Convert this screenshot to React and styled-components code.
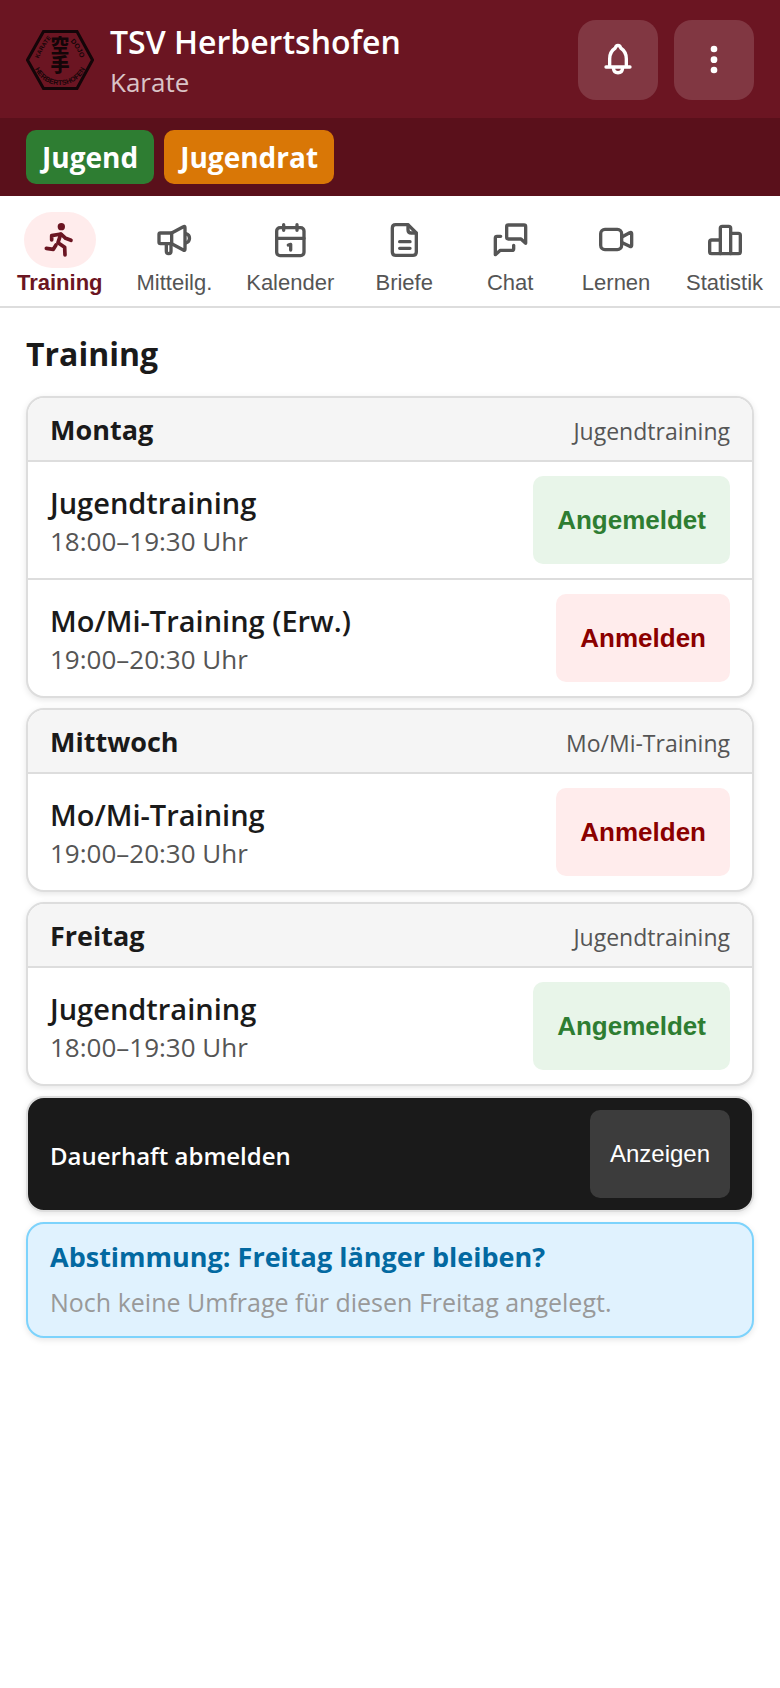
import React, { useState } from "react";
import styled, { createGlobalStyle } from "styled-components";

const GlobalStyle = createGlobalStyle`
  * {
    box-sizing: border-box;
  }

  body {
    margin: 0;
    background: #ffffff;
    color: #1a1a1a;
    font-family: "Segoe UI", "Open Sans", "Noto Sans", sans-serif;
  }

  h1, h2, h3, p {
    margin: 0;
  }
`;

const days = [
  {
    name: "Montag",
    info: "Jugendtraining",
    sessions: [
      { title: "Jugendtraining", time: "18:00–19:30 Uhr", joined: true },
      { title: "Mo/Mi-Training (Erw.)", time: "19:00–20:30 Uhr", joined: false },
    ],
  },
  {
    name: "Mittwoch",
    info: "Mo/Mi-Training",
    sessions: [
      { title: "Mo/Mi-Training", time: "19:00–20:30 Uhr", joined: false },
    ],
  },
  {
    name: "Freitag",
    info: "Jugendtraining",
    sessions: [
      { title: "Jugendtraining", time: "18:00–19:30 Uhr", joined: true },
    ],
  },
];

const tabs = [
  {
    id: "training",
    label: "Training",
    icon: (
      <g strokeWidth="11">
        <circle cx="58" cy="14" r="11" fill="currentColor" stroke="none" />
        <path d="M29 54V41L57 36L71 49L87 55" />
        <path d="M56 37L48 62L68 76L69 99" />
        <path d="M13 79L34 82L42 69" />
      </g>
    ),
  },
  {
    id: "mitteilungen",
    label: "Mitteilg.",
    icon: (
      <>
        <path d="M47 33H13Q9 33 9 37V61Q9 65 13 65H47Z" />
        <path d="M47 33L82 14Q87 11 87 17V81Q87 87 82 84L47 65" />
        <path d="M90 35C104 39 104 59 90 63" />
        <path d="M31 67V88Q31 95 38 95Q45 95 45 88V67" />
      </>
    ),
  },
  {
    id: "kalender",
    label: "Kalender",
    icon: (
      <>
        <rect x="14" y="17" width="82" height="84" rx="10" />
        <path d="M14 49H96M35 8V25M75 8V25M49 69L56 67V84" />
      </>
    ),
  },
  {
    id: "briefe",
    label: "Briefe",
    icon: (
      <>
        <path d="M29 8H66L91 33V90Q91 100 81 100H29Q19 100 19 90V18Q19 8 29 8Z" />
        <path d="M66 9V23Q66 33 76 33H90M41 59H72M41 79H72" />
      </>
    ),
  },
  {
    id: "chat",
    label: "Chat",
    icon: (
      <>
        <path d="M49 9H96Q101 9 101 14V64L87 51H49Q44 51 44 46V14Q44 9 49 9Z" />
        <path d="M26 43H15Q10 43 10 48V98L25 85H60Q65 85 65 80V70" />
      </>
    ),
  },
  {
    id: "lernen",
    label: "Lernen",
    icon: (
      <>
        <rect x="8" y="22" width="63" height="61" rx="13" />
        <path d="M73 44L95 32Q101 29 101 35V70Q101 76 95 73L73 62" />
      </>
    ),
  },
  {
    id: "statistik",
    label: "Statistik",
    icon: (
      <>
        <path d="M40 54H14Q8 54 8 60V89Q8 95 14 95H94Q100 95 100 89V40Q100 34 94 34H71" />
        <path d="M40 95V19Q40 13 46 13H65Q71 13 71 19V95" />
      </>
    ),
  },
];

const Icon = ({ children }) => (
  <IconSvg viewBox="0 0 108 108" aria-hidden="true">
    {children}
  </IconSvg>
);

const ClubLogo = () => (
  <LogoSvg viewBox="0 0 68 60" role="img" aria-label="Karate Dojo Herbertshofen">
    <defs>
      <path id="logo-left" d="M12 31Q16 18 27 6" />
      <path id="logo-right" d="M42 10Q52 17 55 31" />
      <path id="logo-bottom" d="M7 34C15 62 53 62 61 34" />
    </defs>
    <path
      d="M17.500 1.500H51L66.500 30L51 58.500H17.500L1.500 30Z"
      fill="none"
      stroke="#140508"
      strokeWidth="3"
    />
    <LogoText $size="6px">
      <textPath href="#logo-left" startOffset="50%">KARATE</textPath>
    </LogoText>
    <LogoText $size="7px">
      <textPath href="#logo-right" startOffset="50%">DOJO</textPath>
    </LogoText>
    <LogoText $size="7px">
      <textPath href="#logo-bottom" startOffset="50%">HERBERTSHOFEN</textPath>
    </LogoText>
    <LogoKanji x="34" y="6">空手</LogoKanji>
  </LogoSvg>
);

const DayCard = ({ day }) => (
  <Card>
    <CardHeader>
      <CardTitle>{day.name}</CardTitle>
      <CardInfo>{day.info}</CardInfo>
    </CardHeader>
    {day.sessions.map((session) => (
      <Session key={session.title}>
        <SessionText>
          <SessionTitle>{session.title}</SessionTitle>
          <SessionTime>{session.time}</SessionTime>
        </SessionText>
        <JoinButton type="button" $joined={session.joined}>
          {session.joined ? "Angemeldet" : "Anmelden"}
        </JoinButton>
      </Session>
    ))}
  </Card>
);

const App = () => {
  const [active, setActive] = useState("training");

  return (
    <>
      <GlobalStyle />
      <Header>
        <ClubLogo />
        <Brand>
          <ClubName>TSV Herbertshofen</ClubName>
          <Department>Karate</Department>
        </Brand>
        <HeaderButton type="button" aria-label="Benachrichtigungen">
          <Icon>
            <path d="M18 75H90M29 74V50C29 34 37 24 46 18C48 8 60 8 62 18C71 24 79 34 79 50V74M40 78C42 97 66 97 68 78" />
          </Icon>
        </HeaderButton>
        <HeaderButton type="button" aria-label="Menü">
          <Icon>
            <g fill="currentColor" stroke="none">
              <circle cx="54" cy="21" r="10" />
              <circle cx="54" cy="53" r="10" />
              <circle cx="54" cy="84" r="10" />
            </g>
          </Icon>
        </HeaderButton>
      </Header>
      <GroupBar>
        <Group $color="#2e7d32">Jugend</Group>
        <Group $color="#d97706">Jugendrat</Group>
      </GroupBar>
      <TabBar>
        {tabs.map((tab) => (
          <Tab
            key={tab.id}
            type="button"
            $active={active === tab.id}
            onClick={() => setActive(tab.id)}
          >
            <TabIcon $active={active === tab.id}>
              <Icon>{tab.icon}</Icon>
            </TabIcon>
            {tab.label}
          </Tab>
        ))}
      </TabBar>
      <Content>
        <PageTitle>Training</PageTitle>
        <CardList>
          {days.map((day) => (
            <DayCard day={day} key={day.name} />
          ))}
          <SignOffCard>
            <SignOffTitle>Dauerhaft abmelden</SignOffTitle>
            <ShowButton type="button">Anzeigen</ShowButton>
          </SignOffCard>
          <PollCard>
            <PollTitle>Abstimmung: Freitag länger bleiben?</PollTitle>
            <PollText>Noch keine Umfrage für diesen Freitag angelegt.</PollText>
          </PollCard>
        </CardList>
      </Content>
    </>
  );
};

const IconSvg = styled.svg`
  width: 36px;
  height: 36px;
  fill: none;
  stroke: currentColor;
  stroke-width: 10;
  stroke-linecap: round;
  stroke-linejoin: round;
`;

const LogoSvg = styled.svg`
  flex: none;
  width: 68px;
  height: 60px;
`;

const LogoText = styled.text`
  fill: #140508;
  font-family: "Liberation Sans", sans-serif;
  font-size: ${({ $size }) => $size};
  font-weight: bold;
  text-anchor: middle;
`;

const LogoKanji = styled.text`
  fill: #140508;
  font-family: "Noto Sans CJK JP", sans-serif;
  font-size: 19px;
  font-weight: 900;
  writing-mode: vertical-rl;
`;

const Header = styled.header`
  display: flex;
  align-items: center;
  gap: 16px;
  padding: 20px 26px 18px;
  background: #6b1522;
  color: #ffffff;
`;

const Brand = styled.div`
  flex: 1;
  min-width: 0;
`;

const ClubName = styled.h1`
  font-size: 32px;
  font-weight: 600;
  line-height: 44px;
`;

const Department = styled.p`
  color: rgba(255, 255, 255, 0.75);
  font-size: 26px;
  line-height: 36px;
`;

const HeaderButton = styled.button`
  display: flex;
  flex: none;
  align-items: center;
  justify-content: center;
  width: 80px;
  height: 80px;
  padding: 0;
  border: none;
  border-radius: 18px;
  background: rgba(255, 255, 255, 0.15);
  color: #ffffff;
  cursor: pointer;
`;

const GroupBar = styled.div`
  display: flex;
  gap: 10px;
  padding: 12px 26px;
  background: #5a101b;
`;

const Group = styled.span`
  padding: 0 16px;
  border-radius: 10px;
  background: ${({ $color }) => $color};
  color: #ffffff;
  font-size: 28px;
  font-weight: 700;
  line-height: 54px;
`;

const TabBar = styled.nav`
  display: flex;
  padding: 16px 0 8px;
  border-bottom: 2px solid #dddddd;
`;

const Tab = styled.button`
  display: flex;
  flex: 1 1 auto;
  flex-direction: column;
  align-items: center;
  padding: 0;
  border: none;
  background: none;
  color: ${({ $active }) => ($active ? "#6b1522" : "#555555")};
  font-family: "Liberation Sans", Arial, sans-serif;
  font-size: 22px;
  font-weight: ${({ $active }) => ($active ? 700 : 400)};
  line-height: 30px;
  cursor: pointer;
`;

const TabIcon = styled.span`
  display: flex;
  align-items: center;
  justify-content: center;
  width: 72px;
  height: 56px;
  border-radius: 28px;
  background: ${({ $active }) => ($active ? "#ffecec" : "transparent")};
`;

const Content = styled.main`
  padding: 22px 26px;
`;

const PageTitle = styled.h2`
  margin-bottom: 18px;
  font-size: 32px;
  font-weight: 700;
  line-height: 48px;
`;

const CardList = styled.div`
  display: flex;
  flex-direction: column;
  gap: 10px;
`;

const Card = styled.section`
  overflow: hidden;
  border: 2px solid #dddddd;
  border-radius: 18px;
  background: #ffffff;
  box-shadow: 0 2px 6px rgba(0, 0, 0, 0.1);
`;

const CardHeader = styled.div`
  display: flex;
  align-items: baseline;
  justify-content: space-between;
  height: 62px;
  padding: 12px 22px 0;
  background: #f5f5f5;
  line-height: 40px;
`;

const CardTitle = styled.h3`
  font-size: 27px;
  font-weight: 700;
`;

const CardInfo = styled.span`
  color: #555555;
  font-size: 23px;
`;

const Session = styled.div`
  display: flex;
  align-items: center;
  justify-content: space-between;
  padding: 14px 22px;
  border-top: 2px solid #dddddd;
`;

const SessionText = styled.div`
  padding-top: 4px;
  line-height: 38px;
`;

const SessionTitle = styled.p`
  font-size: 29px;
  font-weight: 600;
`;

const SessionTime = styled.p`
  color: #555555;
  font-size: 26px;
`;

const ActionButton = styled.button`
  height: 88px;
  border: none;
  border-radius: 10px;
  font-family: "Liberation Sans", Arial, sans-serif;
  cursor: pointer;
`;

const JoinButton = styled(ActionButton)`
  padding: 0 24px;
  background: ${({ $joined }) => ($joined ? "#e8f5e9" : "#ffecec")};
  color: ${({ $joined }) => ($joined ? "#2e7d32" : "#8b0000")};
  font-size: 26px;
  font-weight: 700;
`;

const ShowButton = styled(ActionButton)`
  padding: 0 20px;
  background: #3c3c3c;
  color: #ffffff;
  font-size: 24px;
`;

const SignOffCard = styled(Card)`
  display: flex;
  align-items: center;
  justify-content: space-between;
  padding: 12px 22px;
  background: #1a1a1a;
`;

const SignOffTitle = styled.h3`
  padding-top: 4px;
  color: #ffffff;
  font-size: 24px;
  font-weight: 600;
  line-height: 38px;
`;

const PollCard = styled(Card)`
  padding: 12px 22px 10px;
  border-color: #7dd3fc;
  background: #e0f2fe;
`;

const PollTitle = styled.h3`
  color: #0369a1;
  font-size: 27px;
  font-weight: 700;
  line-height: 42px;
`;

const PollText = styled.p`
  color: #999999;
  font-size: 25px;
  line-height: 48px;
`;

export default App;
